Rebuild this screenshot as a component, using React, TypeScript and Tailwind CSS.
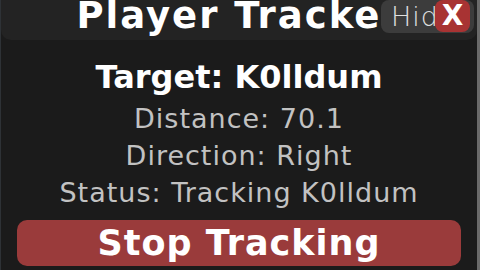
export default function App() {
  const font = { fontFamily: '"DejaVu Sans", "Noto Sans", sans-serif' };
  return (
    <div className="flex h-[270px] w-[480px] overflow-hidden bg-[#6a6a6a]" style={font}>
      <div className="flex h-full w-[477px] flex-col border-l border-[#2e3236] bg-[#1b1b1b]">
        <div className="relative flex h-[40px] shrink-0 items-start justify-center overflow-hidden rounded-b-[10px] bg-[#232323]">
          <div className="mt-[-6px] whitespace-nowrap text-[37px] font-bold leading-[44px] tracking-[2px] text-white">
            Player Tracker
          </div>
          <div className="absolute right-[3px] top-0 flex h-[33px] w-[93px] items-center overflow-hidden rounded-[8px] bg-[#3c3c3c]">
            <span className="pl-[10px] text-[27px] font-extralight leading-none tracking-[1px] text-[#e0e0e0]">Hide</span>
          </div>
          <div className="absolute right-[7px] top-0 flex h-[32px] w-[35px] items-center justify-center rounded-[8px] bg-[#a83333] text-[28px] font-bold leading-none text-white">
            X
          </div>
        </div>
        <div className="flex flex-1 flex-col items-center pt-[18px]">
          <div className="whitespace-nowrap text-[32px] font-bold leading-[38px] text-white">Target: K0lldum</div>
          <div className="mt-[4px] whitespace-nowrap text-[27px] font-normal leading-[37px] tracking-[1px] text-[#c2c2c2]">Distance: 70.1</div>
          <div className="whitespace-nowrap text-[27px] font-normal leading-[37px] tracking-[1px] text-[#c2c2c2]">Direction: Right</div>
          <div className="whitespace-nowrap text-[27px] font-normal leading-[37px] tracking-[1px] text-[#c2c2c2]">Status: Tracking K0lldum</div>
        </div>
        <div className="mx-[16px] mb-[4px] flex h-[46px] shrink-0 items-center justify-center rounded-[10px] bg-[#9a3b3b]">
          <span className="whitespace-nowrap text-[35px] font-bold leading-none tracking-[1px] text-white">Stop Tracking</span>
        </div>
      </div>
    </div>
  );
}
